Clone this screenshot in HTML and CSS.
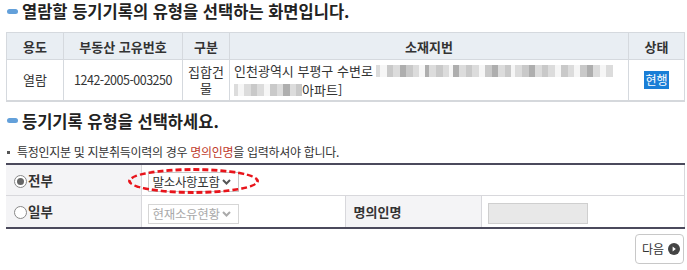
FILE: index.html
```html
<!DOCTYPE html>
<html lang="ko">
<head>
<meta charset="utf-8">
<link rel="stylesheet" href="styles.css">
</head>
<body>
<div class="page">
  <h2 class="title"><span class="pill"></span>열람할 등기기록의 유형을 선택하는 화면입니다.</h2>
  <table class="info">
    <colgroup>
      <col class="c1"><col class="c2"><col class="c3"><col class="c4"><col class="c5">
    </colgroup>
    <thead>
      <tr><th>용도</th><th>부동산 고유번호</th><th>구분</th><th>소재지번</th><th>상태</th></tr>
    </thead>
    <tbody>
      <tr>
        <td>열람</td>
        <td class="num">1242-2005-003250</td>
        <td class="kind">집합건물</td>
        <td class="addr">인천광역시 부평구 수변로 <span class="mosaic"><i class="g1 w4"></i><i class="g0 w8"></i><i class="g2 w6"></i><i class="g1 w8"></i><i class="g3 w6"></i><i class="g2 w8"></i><i class="g1 w6"></i><i class="g0 w6"></i><i class="g3 w4"></i><i class="g1 w8"></i><i class="g2 w8"></i><i class="g1 w6"></i><i class="g0 w4"></i><i class="g3 w6"></i><i class="g1 w8"></i><i class="g2 w6"></i><i class="g1 w8"></i><i class="g0 w6"></i><i class="g2 w8"></i><i class="g3 w6"></i><i class="g1 w8"></i><i class="g2 w6"></i><i class="g0 w4"></i><i class="g1 w8"></i><i class="g2 w8"></i><i class="g3 w6"></i><i class="g1 w8"></i><i class="g2 w6"></i><i class="g1 w8"></i><i class="g0 w6"></i><i class="g2 w8"></i><i class="g1 w6"></i><i class="g0 w6"></i><i class="g2 w8"></i><i class="g3 w6"></i><i class="g1 w8"></i><i class="g0 w6"></i><i class="g1 w8"></i></span><br><span class="mosaic"><i class="g1 w4"></i><i class="g0 w6"></i><i class="g1 w8"></i><i class="g2 w6"></i><i class="g1 w8"></i><i class="g0 w6"></i><i class="g2 w8"></i><i class="g1 w6"></i><i class="g3 w8"></i><i class="g1 w6"></i><i class="g2 w6"></i></span>아파트]</td>
        <td><span class="badge">현행</span></td>
      </tr>
    </tbody>
  </table>

  <h2 class="title title2"><span class="pill"></span>등기기록 유형을 선택하세요.</h2>
  <p class="note"><span class="sq"></span>특정인지분 및 지분취득이력의 경우 <em>명의인명</em>을 입력하셔야 합니다.</p>

  <table class="form">
    <colgroup>
      <col class="f1"><col class="f2"><col class="f3"><col class="f4">
    </colgroup>
    <tbody>
      <tr>
        <th><span class="radio on"></span>전부</th>
        <td colspan="3">
          <span class="selwrap"><span class="select">말소사항포함<svg class="chev" width="9" height="6" viewBox="0 0 9 6"><path d="M1 1 L4.5 4.5 L8 1" fill="none" stroke="#555" stroke-width="2"/></svg></span><span class="ellipse"></span></span>
        </td>
      </tr>
      <tr>
        <th><span class="radio"></span>일부</th>
        <td><span class="select off">현재소유현황<svg class="chev" width="9" height="6" viewBox="0 0 9 6"><path d="M1 1 L4.5 4.5 L8 1" fill="none" stroke="#aaa" stroke-width="2"/></svg></span></td>
        <th class="nm">명의인명</th>
        <td><span class="input"></span></td>
      </tr>
    </tbody>
  </table>

  <div class="actions">
    <button class="next">다음<svg width="12" height="12" viewBox="0 0 12 12"><circle cx="6" cy="6" r="6" fill="#444"/><path d="M4.6 3.4 L7.8 6 L4.6 8.6 Z" fill="#fff"/></svg></button>
  </div>
</div>
</body>
</html>
```
FILE: styles.css
```css
* { box-sizing: border-box; }
body {
  margin: 0;
  background: #fff;
  color: #333;
  font-family: "Noto Sans CJK KR", "Noto Sans", sans-serif;
}
.page {
  width: 678px;
  margin-left: 6px;
}
.title {
  margin: 0;
  display: flex;
  align-items: center;
  height: 22px;
  font-size: 16.5px;
  line-height: 22px;
  font-weight: bold;
  color: #222;
}
.pill {
  flex: none;
  width: 11px;
  height: 5px;
  margin: 0 4px 0 1px;
  border-radius: 3px;
  background: #63a0da;
}
.info {
  margin-top: 10px;
  width: 678px;
  border-collapse: collapse;
  table-layout: fixed;
  font-size: 13px;
  border-bottom: 2px solid #d5d8dc;
}
.c1 { width: 57px; }
.c2 { width: 119px; }
.c3 { width: 47px; }
.c4 { width: 399px; }
.c5 { width: 56px; }
.info th {
  height: 27px;
  background: #e9eef3;
  border: 1px solid #d5d9de;
  font-size: 13px;
  font-weight: bold;
  color: #333;
  padding: 0;
}
.info td {
  height: 41px;
  border: 1px solid #d5d9de;
  border-bottom: 0;
  text-align: center;
  padding: 0 2px;
  line-height: 16px;
  color: #333;
}
.info td.num { font-size: 12.5px; letter-spacing: -0.5px; }
.info td.kind { padding: 0 2px; font-size: 13px; }
.info td.addr {
  text-align: left;
  padding: 0 4px;
  line-height: 19px;
}
.mosaic {
  display: inline-flex;
  vertical-align: -1px;
  height: 12px;
}
.mosaic i { display: block; height: 12px; }
.w4 { width: 4px; }
.w6 { width: 6px; }
.w8 { width: 7px; }
.g0 { background: #f6f6f6; }
.g1 { background: #dcdcdc; }
.g2 { background: #c9c9c9; }
.g3 { background: #aeaeae; }
.badge {
  display: inline-block;
  background: #1a7ed6;
  color: #fff;
  font-size: 12px;
  line-height: 18px;
  padding: 0 1px;
}
.title2 { margin-top: 8px; }
.note {
  margin: 12px 0 0;
  font-size: 12px;
  line-height: 16px;
  letter-spacing: -0.3px;
  color: #333;
}
.note em { font-style: normal; color: #c0392b; }
.sq {
  display: inline-block;
  width: 3px;
  height: 3px;
  background: #555;
  margin: 0 7px 0 1px;
  vertical-align: 3px;
}
.form {
  margin-top: 3px;
  width: 678px;
  border-collapse: collapse;
  table-layout: fixed;
  border-top: 2px solid #4b4a5c;
  border-bottom: 2px solid #4b4a5c;
}
.f1 { width: 135px; }
.f2 { width: 204px; }
.f3 { width: 136px; }
.f4 { width: 203px; }
.form th, .form td {
  height: 32px;
  border-top: 1px solid #d8d8dc;
  padding: 0;
}
.form th {
  background: #f4f4f6;
  text-align: left;
  font-size: 13.5px;
  font-weight: bold;
  color: #333;
  padding-left: 8px;
  border-right: 1px solid #d8d8dc;
}
.form td { padding-left: 6px; border-right: 1px solid #d8d8dc; }
.form th.nm { padding-left: 8px; font-size: 13px; }
.radio {
  display: inline-block;
  width: 13px;
  height: 13px;
  border: 1px solid #888;
  border-radius: 50%;
  background: #fff;
  vertical-align: -2px;
  margin-right: 1px;
  position: relative;
}
.radio.on::after {
  content: "";
  position: absolute;
  left: 2px;
  top: 2px;
  width: 7px;
  height: 7px;
  border-radius: 50%;
  background: #666;
}
.selwrap {
  position: relative;
  display: inline-flex;
  vertical-align: middle;
}
.select {
  display: inline-flex;
  align-items: center;
  height: 20px;
  width: 91px;
  border: 1px solid #c8c8c8;
  padding-left: 4px;
  font-size: 12.5px;
  line-height: 18px;
  color: #333;
  background: #fff;
  vertical-align: middle;
  white-space: nowrap;
  letter-spacing: -0.3px;
}
.select .chev { margin-left: 2px; flex: none; }
.select.off { color: #aaa; border-color: #d6d6d6; }
.ellipse {
  position: absolute;
  left: -20px;
  top: -4px;
  width: 131px;
  height: 26px;
  border: 3px dashed #e8141b;
  border-radius: 50%;
}
.input {
  display: inline-block;
  width: 100px;
  height: 21px;
  background: #e8e8e8;
  border: 1px solid #cfcfcf;
  vertical-align: middle;
}
.actions {
  display: flex;
  justify-content: flex-end;
  margin-top: 5px;
}
.next {
  display: flex;
  align-items: center;
  gap: 4px;
  width: 49px;
  height: 30px;
  padding: 0 0 0 6px;
  background: #fff;
  border: 1px solid #c8c8c8;
  border-radius: 4px;
  font-family: "Noto Sans CJK KR", "Noto Sans", sans-serif;
  font-size: 12px;
  color: #333;
}
```
